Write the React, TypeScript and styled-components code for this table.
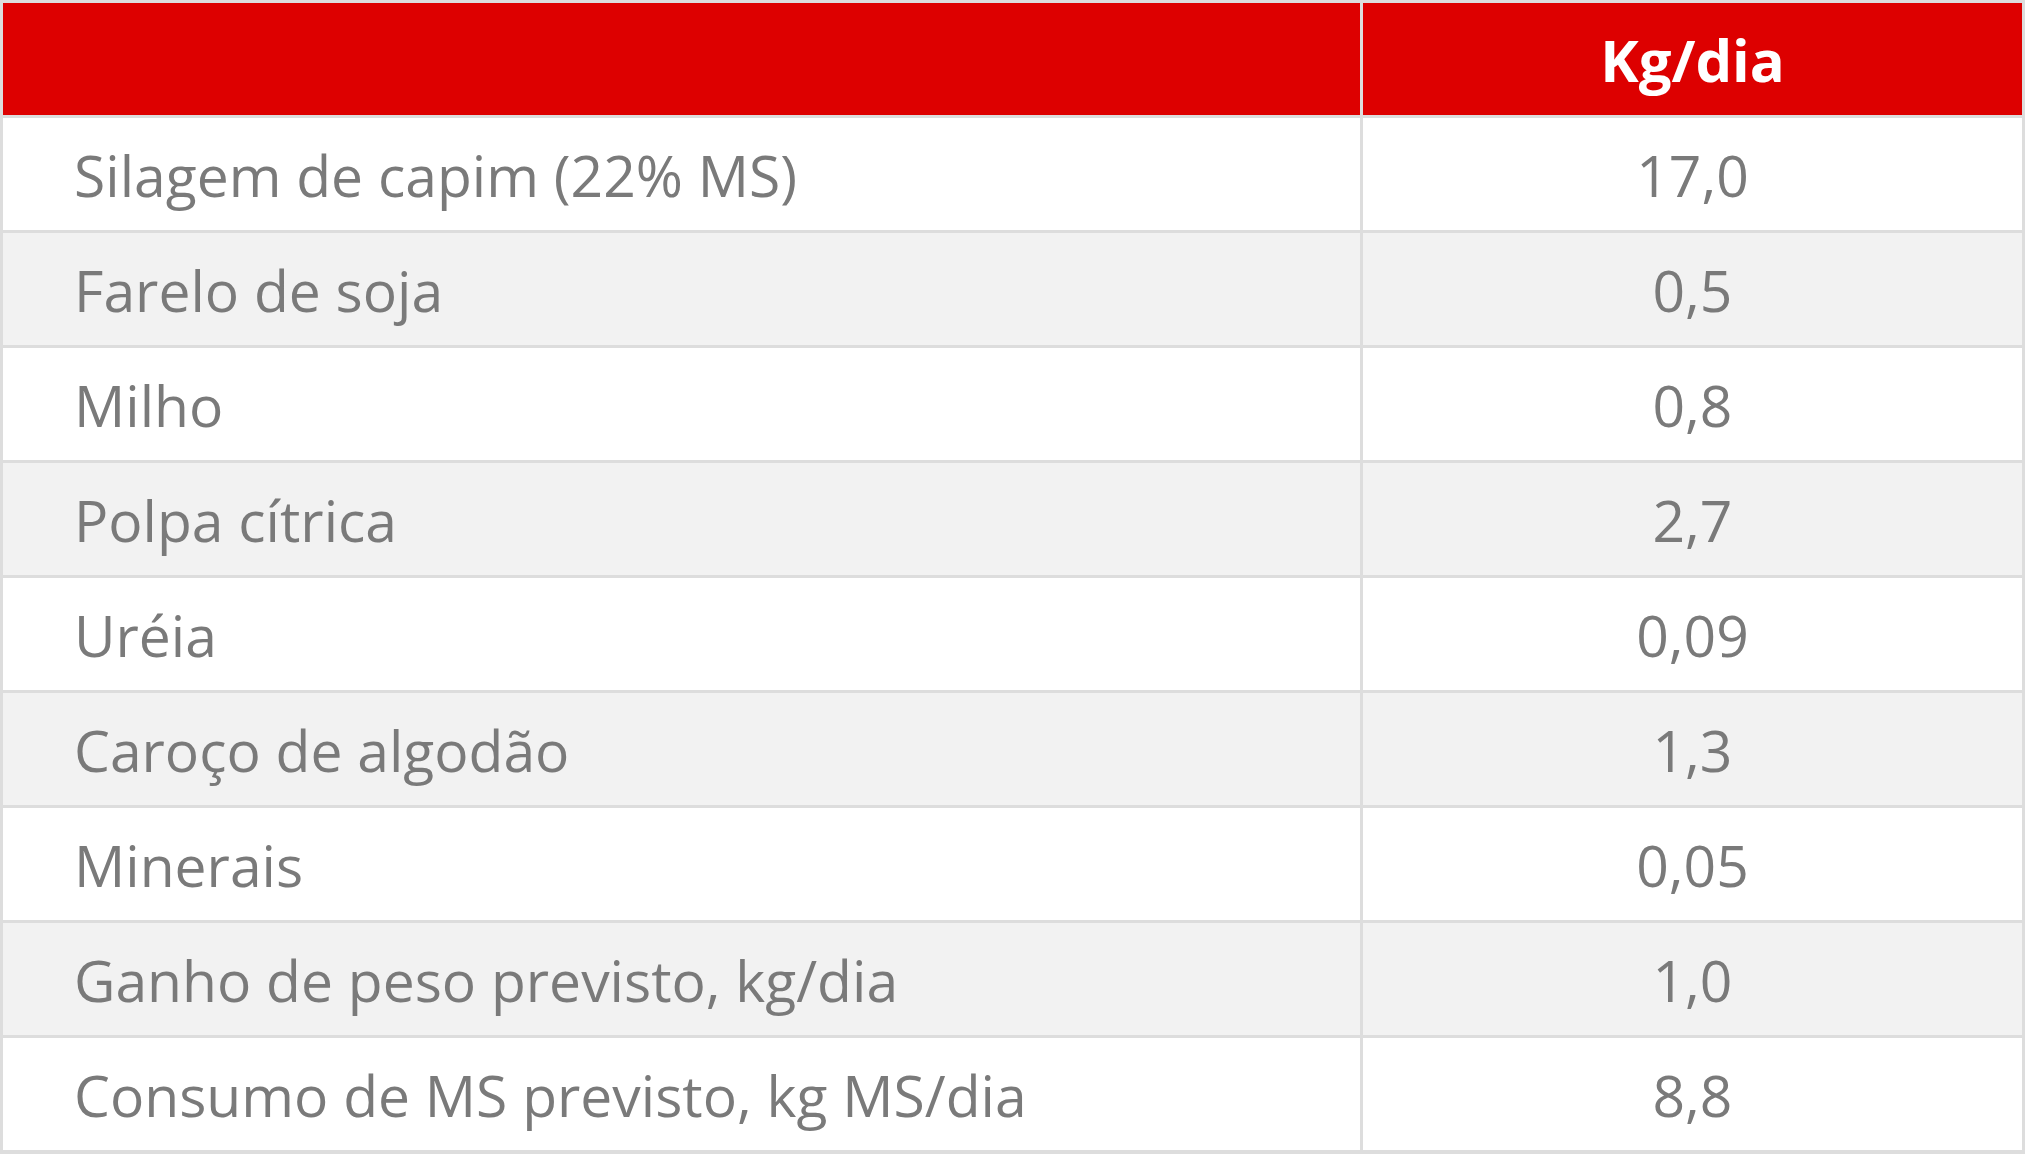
import React from 'react';
import styled, { createGlobalStyle } from 'styled-components';

const GlobalStyle = createGlobalStyle`
  html, body { margin: 0; padding: 0; background: #fff; }
  body { font-family: "Open Sans", "Noto Sans", sans-serif; }
`;

const Table = styled.div`
  display: grid;
  grid-template-columns: 1357px 1fr;
  grid-auto-rows: 112px;
  gap: 3px;
  padding: 3px;
  background: #dddddd;
  width: 2025px;
  height: 1154px;
  box-sizing: border-box;
`;

const HeadCell = styled.div<{ $center?: boolean }>`
  background: #dd0000;
  color: #fff;
  font-weight: 700;
  font-size: 58px;
  display: flex;
  align-items: center;
  justify-content: ${p => (p.$center ? 'center' : 'flex-start')};
`;

const Cell = styled.div<{ $alt: boolean; $center?: boolean }>`
  background: ${p => (p.$alt ? '#f2f2f2' : '#ffffff')};
  color: #7a7a7a;
  font-size: 57px;
  display: flex;
  align-items: center;
  justify-content: ${p => (p.$center ? 'center' : 'flex-start')};
  padding-left: ${p => (p.$center ? '0' : '71px')};
  padding-top: 2px;
`;

const rows: [string, string][] = [
  ['Silagem de capim (22% MS)', '17,0'],
  ['Farelo de soja', '0,5'],
  ['Milho', '0,8'],
  ['Polpa cítrica', '2,7'],
  ['Uréia', '0,09'],
  ['Caroço de algodão', '1,3'],
  ['Minerais', '0,05'],
  ['Ganho de peso previsto, kg/dia', '1,0'],
  ['Consumo de MS previsto, kg MS/dia', '8,8'],
];

export default function App() {
  return (
    <>
      <GlobalStyle />
      <Table>
        <HeadCell />
        <HeadCell $center>Kg/dia</HeadCell>
        {rows.map(([label, value], i) => (
          <React.Fragment key={label}>
            <Cell $alt={i % 2 === 1}>{label}</Cell>
            <Cell $alt={i % 2 === 1} $center>{value}</Cell>
          </React.Fragment>
        ))}
      </Table>
    </>
  );
}
